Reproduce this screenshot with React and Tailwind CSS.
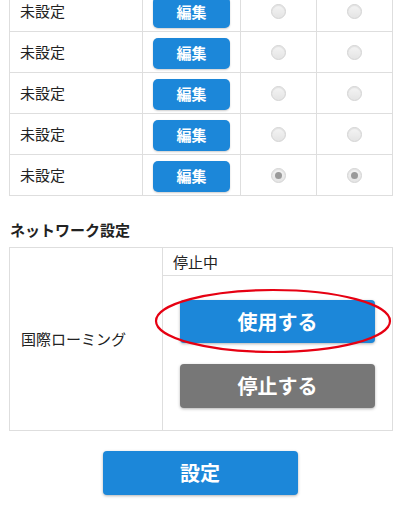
import React from 'react';

const rows = [false, false, false, false, true];

const Radio = ({ checked }) => (
  <span className="inline-flex h-[15px] w-[15px] items-center justify-center rounded-full border border-[#d4d4d4] bg-gradient-to-b from-[#f4f4f4] to-[#e4e4e4] shadow-[inset_0_1px_1px_rgba(0,0,0,0.08)]">
    {checked && <span className="h-[7px] w-[7px] rounded-full bg-[#9a9a9a]" />}
  </span>
);

const App = () => {
  return (
    <div
      className="h-[516px] w-[400px] overflow-hidden bg-white px-[9px] text-[#222]"
      style={{ fontFamily: '"Noto Sans CJK JP", "Noto Sans", sans-serif' }}
    >
      <table className="-mt-[10px] w-[383px] table-fixed border-collapse text-[15px]">
        <colgroup>
          <col className="w-[133px]" />
          <col className="w-[98px]" />
          <col className="w-[76px]" />
          <col className="w-[76px]" />
        </colgroup>
        <tbody>
          {rows.map((checked, i) => (
            <tr key={i} className="h-[41px]">
              <td className="border border-[#dedede] pl-[10px] align-middle">未設定</td>
              <td className="border border-[#dedede] px-[10px] align-middle">
                <button className="mt-[2px] flex h-[31px] w-[77px] items-center justify-center rounded-[5px] bg-[#1c87d9] text-[15px] font-bold text-white shadow-[0_1px_2px_rgba(0,0,0,0.2)]">
                  編集
                </button>
              </td>
              <td className="border border-[#dedede] text-center align-middle">
                <div className="flex justify-center">
                  <Radio checked={checked} />
                </div>
              </td>
              <td className="border border-[#dedede] text-center align-middle">
                <div className="flex justify-center">
                  <Radio checked={checked} />
                </div>
              </td>
            </tr>
          ))}
        </tbody>
      </table>

      <h2 className="mt-[24px] pl-[1px] text-[15px] font-bold leading-[20px]">ネットワーク設定</h2>

      <div className="relative mt-[7px]">
        <table className="w-[383px] table-fixed border-collapse text-[15px]">
          <colgroup>
            <col className="w-[153px]" />
            <col className="w-[230px]" />
          </colgroup>
          <tbody>
            <tr className="h-[28px]">
              <td rowSpan={2} className="border border-[#dedede] pl-[11px] align-middle">
                国際ローミング
              </td>
              <td className="border border-[#dedede] pl-[10px] align-middle leading-[26px]">停止中</td>
            </tr>
            <tr>
              <td className="border border-[#dedede] pl-[17px] pr-[16px] pt-[24px] pb-[22px]">
                <div className="flex flex-col gap-[21px]">
                  <button className="flex h-[43px] w-[195px] items-center justify-center rounded-[4px] bg-[#1c87d9] text-[20px] font-bold text-white shadow-[0_1px_3px_rgba(0,0,0,0.3)]">
                    使用する
                  </button>
                  <button className="flex h-[44px] w-[195px] items-center justify-center rounded-[4px] bg-[#777777] text-[20px] font-bold text-white shadow-[0_1px_3px_rgba(0,0,0,0.3)]">
                    停止する
                  </button>
                </div>
              </td>
            </tr>
          </tbody>
        </table>
        <svg className="absolute left-[145px] top-[41px]" width="238" height="66" viewBox="0 0 238 66">
          <ellipse cx="119" cy="33" rx="117" ry="31" fill="none" stroke="#e60012" strokeWidth="2.2" />
        </svg>
      </div>

      <div className="mt-[20px] flex justify-center">
        <button className="flex h-[44px] w-[195px] items-center justify-center rounded-[4px] bg-[#1c87d9] text-[20px] font-bold text-white shadow-[0_1px_3px_rgba(0,0,0,0.3)]">
          設定
        </button>
      </div>
    </div>
  );
};

export default App;
